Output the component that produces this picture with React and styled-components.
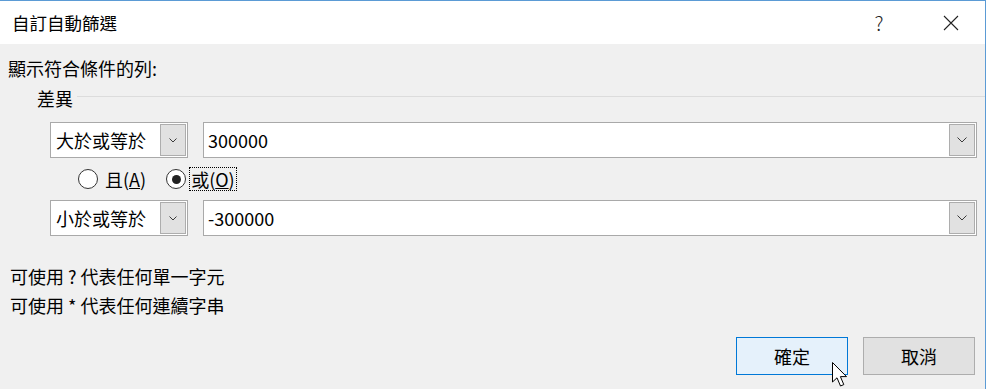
import React from 'react';
import styled, { createGlobalStyle } from 'styled-components';

const GlobalStyle = createGlobalStyle`
  html, body {
    margin: 0;
    padding: 0;
    background: #ffffff;
  }
  body {
    font-family: "Noto Sans CJK TC", "Noto Sans", sans-serif;
    color: #000;
  }
`;

// window frame
const Window = styled.div`
  position: relative;
  width: 985px;
  height: 388px;
  border-top: 1px solid #5b9bd5;
  border-right: 1px solid #5b9bd5;
  background: #f0f0f0;
  display: flex;
  flex-direction: column;
  overflow: hidden;
`;
const TitleBar = styled.div`
  height: 43px;
  background: #ffffff;
  display: flex;
  align-items: center;
  padding-left: 12px;
  font-size: 17.5px;
`;
const Title = styled.div`
  flex: 1;
`;
const TitleButton = styled.div`
  width: ${p => p.w}px;
  margin-right: ${p => p.mr || 0}px;
  display: flex;
  justify-content: center;
  align-items: center;
  font-size: 20px;
  font-weight: 300;
  color: #222;
`;
const Body = styled.div`
  flex: 1;
  padding: 12px 0 0 8px;
  display: flex;
  flex-direction: column;
  font-size: 18px;
`;
const Label = styled.div`
  line-height: 24px;
  height: 24px;
`;
const GroupHead = styled.div`
  display: flex;
  align-items: center;
  margin: 6px 0 0 29px;
  height: 24px;
  gap: 4px;
`;
const GroupLine = styled.div`
  flex: 1;
  height: 1px;
  background: #dcdcdc;
  margin-top: -3px;
`;
const CondRow = styled.div`
  display: flex;
  margin: ${p => p.mt}px 0 0 42px;
  gap: 15px;
`;
const Combo = styled.div`
  box-sizing: border-box;
  width: 138px;
  height: 36px;
  background: #fff;
  border: 1px solid #a9a9a9;
  display: flex;
  align-items: center;
  padding: 1px;
`;
const ComboText = styled.div`
  flex: 1;
  padding-left: 4px;
  font-size: 18px;
`;
const DropButton = styled.div`
  box-sizing: border-box;
  width: 26px;
  height: 100%;
  background: #e1e1e1;
  border: 1px solid #adadad;
  display: flex;
  align-items: center;
  justify-content: center;
`;
const Field = styled(Combo)`
  width: 774px;
`;
const FieldText = styled(ComboText)`
  padding-left: 3px;
`;
const RadioRow = styled.div`
  display: flex;
  align-items: center;
  margin: 8px 0 0 70px;
  height: 26px;
`;
const RadioItem = styled.div`
  display: flex;
  align-items: center;
  margin-right: ${p => p.mr || 0}px;
`;
const Circle = styled.div`
  box-sizing: border-box;
  width: 20px;
  height: 20px;
  border-radius: 50%;
  border: 1px solid #333;
  background: #fff;
  display: flex;
  align-items: center;
  justify-content: center;
  &::after {
    content: '';
    width: 9px;
    height: 9px;
    border-radius: 50%;
    background: ${p => (p.checked ? '#222' : 'transparent')};
  }
`;
const RadioLabel = styled.div`
  margin-left: ${p => p.ml}px;
  padding: 0 1px;
  line-height: 22px;
  border: 1px ${p => (p.focused ? 'dotted #000' : 'solid transparent')};
`;
const Hints = styled.div`
  margin-top: 28px;
  padding-left: 2px;
  display: flex;
  flex-direction: column;
  gap: 5px;
`;
const Footer = styled.div`
  display: flex;
  justify-content: flex-end;
  gap: 15px;
  margin: 20px 10px 0 0;
`;
const Button = styled.div`
  box-sizing: border-box;
  width: 112px;
  height: 38px;
  display: flex;
  align-items: center;
  justify-content: center;
  font-size: 18px;
  background: ${p => (p.primary ? '#e5f1fb' : '#e1e1e1')};
  border: 1px solid ${p => (p.primary ? '#0078d7' : '#adadad')};
`;
const Cursor = styled.svg`
  position: absolute;
  left: 831px;
  top: 360px;
`;

const Chevron = ({ w = 10 }) => (
  <svg width={w} height={w / 2 + 1} viewBox={`0 0 ${w} ${w / 2 + 1}`}>
    <path d={`M0.5 0.5 L${w / 2} ${w / 2} L${w - 0.5} 0.5`} fill="none" stroke="#3a3a3a" strokeWidth="1" />
  </svg>
);

export default function App() {
  return (
    <React.Fragment>
      <GlobalStyle />
      <Window>
        <TitleBar>
          <Title>自訂自動篩選</Title>
          <TitleButton w={46} mr={15}>?</TitleButton>
          <TitleButton w={68}>
            <svg width="16" height="16" viewBox="0 0 16 16">
              <path d="M1 1 L15 15 M15 1 L1 15" stroke="#222" strokeWidth="1.1" />
            </svg>
          </TitleButton>
        </TitleBar>
        <Body>
          <Label>顯示符合條件的列:</Label>
          <GroupHead>
            <span>差異</span>
            <GroupLine />
          </GroupHead>
          <CondRow mt={12}>
            <Combo>
              <ComboText>大於或等於</ComboText>
              <DropButton><Chevron w={8} /></DropButton>
            </Combo>
            <Field>
              <FieldText>300000</FieldText>
              <DropButton><Chevron w={10} /></DropButton>
            </Field>
          </CondRow>
          <RadioRow>
            <RadioItem mr={18}>
              <Circle />
              <RadioLabel ml={5}>且(<u>A</u>)</RadioLabel>
            </RadioItem>
            <RadioItem>
              <Circle checked />
              <RadioLabel ml={3} focused>或(<u>O</u>)</RadioLabel>
            </RadioItem>
          </RadioRow>
          <CondRow mt={8}>
            <Combo>
              <ComboText>小於或等於</ComboText>
              <DropButton><Chevron w={8} /></DropButton>
            </Combo>
            <Field>
              <FieldText>-300000</FieldText>
              <DropButton><Chevron w={10} /></DropButton>
            </Field>
          </CondRow>
          <Hints>
            <Label>可使用 ? 代表任何單一字元</Label>
            <Label>可使用 * 代表任何連續字串</Label>
          </Hints>
          <Footer>
            <Button primary>確定</Button>
            <Button>取消</Button>
          </Footer>
        </Body>
        <Cursor width="20" height="28" viewBox="0 0 20 28">
          <path d="M1.5 1.5 L1.5 21 L6 16.8 L9.5 25 L12.8 23.6 L9.4 15.6 L15.5 15.6 Z" fill="#fff" stroke="#000" strokeWidth="1" />
        </Cursor>
      </Window>
    </React.Fragment>
  );
}
